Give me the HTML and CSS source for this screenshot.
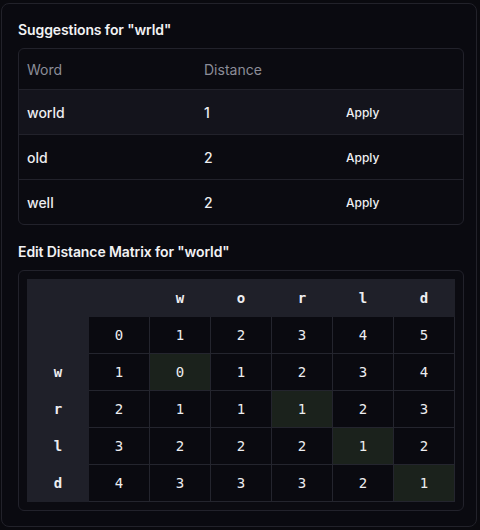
FILE: index.html
```html
<!DOCTYPE html>
<html>
<head>
<meta charset="utf-8">
<link rel="stylesheet" href="styles.css">
</head>
<body>
<div class="card">
  <h2 class="title">Suggestions for "wrld"</h2>
  <div class="suggest">
    <div class="srow shead"><div>Word</div><div>Distance</div><div></div></div>
    <div class="srow hover"><div class="word">world</div><div>1</div><div class="act"><span class="apply">Apply</span></div></div>
    <div class="srow"><div class="word">old</div><div>2</div><div class="act"><span class="apply">Apply</span></div></div>
    <div class="srow"><div class="word">well</div><div>2</div><div class="act"><span class="apply">Apply</span></div></div>
  </div>
  <h2 class="title second">Edit Distance Matrix for "world"</h2>
  <div class="matrix-box">
    <table class="matrix">
      <tr class="mhead"><th class="lab"></th><th></th><th>w</th><th>o</th><th>r</th><th>l</th><th>d</th></tr>
      <tr><th class="lab"></th><td>0</td><td>1</td><td>2</td><td>3</td><td>4</td><td>5</td></tr>
      <tr><th class="lab">w</th><td>1</td><td class="hl">0</td><td>1</td><td>2</td><td>3</td><td>4</td></tr>
      <tr><th class="lab">r</th><td>2</td><td>1</td><td>1</td><td class="hl">1</td><td>2</td><td>3</td></tr>
      <tr><th class="lab">l</th><td>3</td><td>2</td><td>2</td><td>2</td><td class="hl">1</td><td>2</td></tr>
      <tr><th class="lab">d</th><td>4</td><td>3</td><td>3</td><td>3</td><td>2</td><td class="hl">1</td></tr>
    </table>
  </div>
</div>
</body>
</html>
```
FILE: styles.css
```css
html, body {
  margin: 0;
  padding: 0;
  background: #0a0a0f;
}
body {
  font-family: Inter, "Liberation Sans", sans-serif;
  color: #ededf0;
  padding: 3px 0 0 1px;
}
.card {
  width: 476px;
  height: 524px;
  box-sizing: border-box;
  border: 1px solid #22222a;
  border-radius: 8px;
  background: #0a0a10;
  padding: 16px 12px 16px 16px;
}
.title {
  margin: 0;
  font-size: 14px;
  line-height: 20px;
  font-weight: 600;
  color: #f2f2f4;
  letter-spacing: -0.1px;
}
.title.second {
  margin-top: 17px;
}
.suggest {
  margin-top: 8px;
  width: 446px;
  box-sizing: border-box;
  border: 1px solid #22222b;
  border-radius: 6px;
  overflow: hidden;
  background: #0b0b11;
}
.srow {
  display: grid;
  grid-template-columns: 177px 142px 1fr;
  height: 44px;
  align-items: center;
  font-size: 14px;
  font-weight: 500;
  border-top: 1px solid #22222b;
}
.srow > div {
  padding-left: 8px;
}
.srow > .act {
  padding-bottom: 2px;
}
.srow.shead {
  border-top: none;
  height: 40px;
  font-weight: 400;
  color: #8c8d98;
}
.srow.hover {
  background: #14141c;
}
.apply {
  font-size: 12px;
  font-weight: 500;
  color: #f0f0f3;
}
.matrix-box {
  margin-top: 8px;
  width: 446px;
  box-sizing: border-box;
  border: 1px solid #22222b;
  border-radius: 6px;
  padding: 8px;
  background: #0b0b11;
}
.matrix {
  border-collapse: collapse;
  border-spacing: 0;
  font-family: "DejaVu Sans Mono", monospace;
  font-size: 14px;
  color: #ededf0;
}
.matrix th, .matrix td {
  padding: 0;
  text-align: center;
  width: 60px;
  height: 36px;
}
.matrix th {
  font-weight: 700;
  background: #1f2029;
}
.matrix .mhead th {
  height: 38px;
}
.matrix th.lab {
  width: 62px;
}
.matrix td {
  background: #0a0a10;
  border-right: 1px solid #24252e;
  border-bottom: 1px solid #24252e;
}
.matrix td.hl {
  background: #1b221c;
}
```
